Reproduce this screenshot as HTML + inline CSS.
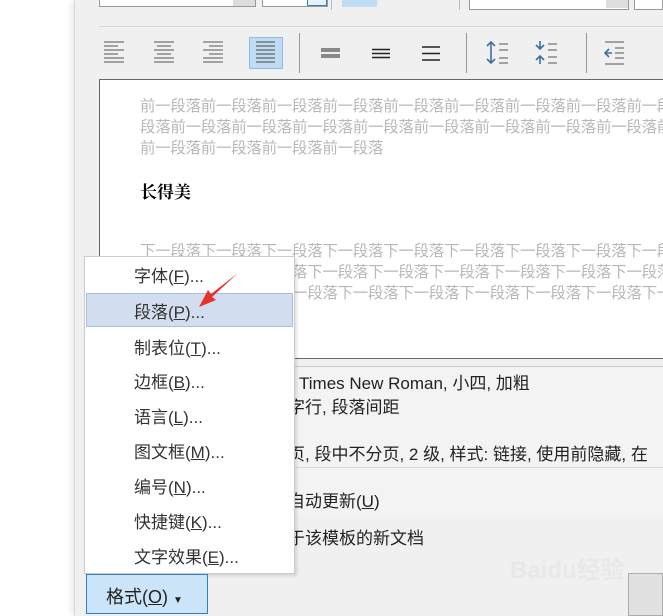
<!DOCTYPE html>
<html><head><meta charset="utf-8"><style>
*{margin:0;padding:0;box-sizing:border-box}
html,body{width:663px;height:616px;overflow:hidden}
body{background:#fff;position:relative;font-family:"Liberation Sans","Microsoft YaHei","Noto Sans CJK SC",sans-serif}
#w{position:absolute;left:0;top:0;width:663px;height:616px;overflow:hidden}
.a{position:absolute}
.dlg{left:74px;top:0;width:589px;height:616px;background:#f0f0f0;border-left:1px solid #d8d8d8;box-shadow:-3px 0 6px rgba(0,0,0,.08)}
.gt{color:#b8b8b8;font-size:15.5px;line-height:21px;white-space:nowrap;letter-spacing:-0.3px}
.mi{left:134px;font-size:17px;color:#333;white-space:nowrap}
.mi u{text-decoration:underline}
.dt{font-size:17px;color:#222;white-space:nowrap}
</style></head><body><div id="w">
<div class="a dlg"></div>
<div class="a" style="left:99px;top:0;width:157px;height:7px;background:#fff;border:1px solid #999;border-top:none"></div>
<div class="a" style="left:233px;top:0;width:22px;height:6px;background:#ddd"></div>
<div class="a" style="left:262px;top:0;width:66px;height:7px;background:#fff;border:1px solid #999;border-top:none"></div>
<div class="a" style="left:307px;top:0;width:20px;height:6px;background:#e5f1fb;border:1px solid #3c7fb1;border-top:none"></div>
<div class="a" style="left:331px;top:0;width:1px;height:10px;background:#bbb"></div>
<div class="a" style="left:342px;top:0;width:35px;height:7px;background:#bfdcf4"></div>
<div class="a" style="left:459px;top:0;width:1px;height:10px;background:#bbb"></div>
<div class="a" style="left:469px;top:0;width:160px;height:10px;background:#fff;border:1px solid #999;border-top:none"></div>
<div class="a" style="left:606px;top:0;width:22px;height:8px;background:#ddd"></div>
<div class="a" style="left:634px;top:0;width:29px;height:10px;background:#fff;border:1px solid #999;border-top:none"></div>
<div class="a" style="left:99px;top:26px;width:564px;height:1px;background:#d8d8d8"></div>
<svg class="a" style="left:0;top:30px" width="663" height="46">
<g stroke="#555" stroke-width="1">
<path d="M104 12h20M104 16h14M104 20h20M104 24h14M104 28h20M104 32h20"/>
<path d="M154 12h20M157 16h14M154 20h20M157 24h14M154 28h20M154 32h20"/>
<path d="M203 12h20M209 16h14M203 20h20M209 24h14M203 28h20M203 32h20"/>
</g>
<rect x="249.5" y="7.5" width="33" height="31" fill="#bfdcf4" stroke="#8fbde6"/>
<path d="M256 12h19M256 16h19M256 20h19M256 24h19M256 28h19M256 32h19" stroke="#444"/>
<path d="M299.5 3v40M466.5 3v40M586.5 3v40" stroke="#999"/>
<path d="M321 19h19M321 21h19M321 25h19M321 27h19" stroke="#222" stroke-width="1"/>
<path d="M372 19.5h18M372 23.5h18M372 27.5h18" stroke="#222" stroke-width="1.6"/>
<path d="M422 17h18M422 23.5h18M422 30h18" stroke="#222" stroke-width="1.6"/>
<g stroke="#3f6e9f" stroke-width="1.6" fill="none">
<path d="M491 12v21M487 16l4-4 4 4M487 29l4 4 4-4"/>
<path d="M540 11v8M536 15l4 4 4-4M540 26v8M536 30l4-4 4 4"/>
<path d="M606 23h6M609 19l-4 4 4 4"/>
</g>
<path d="M499 14h9M499 20h9M499 28h9M499 33h9M548 14h9M548 20h9M548 27h9M548 33h9M605 12h19M615 18h9M615 23h9M615 28h9M605 34h19" stroke="#555"/>
</svg>
<div class="a" style="left:99px;top:79px;width:564px;height:280px;background:#fff;border:1px solid #666;border-right:none"></div>
<div class="a gt" style="left:140px;top:96px">前一段落前一段落前一段落前一段落前一段落前一段落前一段落前一段落前一段落<br>段落前一段落前一段落前一段落前一段落前一段落前一段落前一段落前一段落前一<br>前一段落前一段落前一段落前一段落</div>
<div class="a" style="left:140px;top:178px;font-size:17px;font-weight:bold;font-family:'Liberation Serif','Noto Serif CJK SC',serif;color:#000">长得美</div>
<div class="a gt" style="left:140px;top:241px">下一段落下一段落下一段落下一段落下一段落下一段落下一段落下一段落下一段落<br>一段落下一段落下一段落下一段落下一段落下一段落下一段落下一段落下一段落下一<br>落下一段落下一段落下一段落下一段落下一段落下一段落下一段落下一段落下一段落<br>下一段落</div>
<div class="a" style="left:99px;top:366px;width:564px;height:1px;background:#ccc"></div>
<div class="a" style="left:99px;top:367px;width:564px;height:150px;background:#f3f3f3"></div>
<div class="a" style="left:99px;top:467px;width:564px;height:1px;background:#d8d8d8"></div>
<div class="a dt" style="left:299px;top:369px">Times New Roman, 小四, 加粗</div>
<div class="a dt" style="left:288px;top:393px">字行, 段落间距</div>
<div class="a dt" style="left:288px;top:440px">页, 段中不分页, 2 级, 样式: 链接, 使用前隐藏, 在</div>
<div class="a dt" style="left:288px;top:487px">自动更新(<u>U</u>)</div>
<div class="a dt" style="left:288px;top:524px">于该模板的新文档</div>
<div class="a" style="left:628px;top:573px;width:35px;height:43px;background:#e1e1e1;border:1px solid #adadad"></div>
<div class="a" style="left:510px;top:550px;font-size:24px;font-weight:bold;color:#e8e8e8">Baidu经验</div>
<div class="a" style="left:84px;top:256px;width:211px;height:318px;background:#fff;border:1px solid #ccc;box-shadow:2px 2px 3px rgba(0,0,0,.12)"></div>
<div class="a" style="left:86px;top:293px;width:207px;height:34px;background:#d2def0;border:1px solid #a9bfe0"></div>
<div class="a mi" style="top:262px">字体(<u>F</u>)...</div>
<div class="a mi" style="top:298px">段落(<u>P</u>)...</div>
<div class="a mi" style="top:334px">制表位(<u>T</u>)...</div>
<div class="a mi" style="top:368px">边框(<u>B</u>)...</div>
<div class="a mi" style="top:403px">语言(<u>L</u>)...</div>
<div class="a mi" style="top:438px">图文框(<u>M</u>)...</div>
<div class="a mi" style="top:473px">编号(<u>N</u>)...</div>
<div class="a mi" style="top:508px">快捷键(<u>K</u>)...</div>
<div class="a mi" style="top:543px">文字效果(<u>E</u>)...</div>
<svg class="a" style="left:195px;top:270px" width="50" height="40"><path d="M43 3L16 24l-3-4-9 17 17-7-4-3z" fill="#e8312a"/></svg>
<div class="a" style="left:86px;top:574px;width:122px;height:40px;background:#cce4f7;border:1px solid #2f7fc0"></div>
<div class="a" style="left:106px;top:583px;font-size:18px;color:#222">格式(<u>O</u>) <span style="font-size:10px">▼</span></div>
</div></body></html>
